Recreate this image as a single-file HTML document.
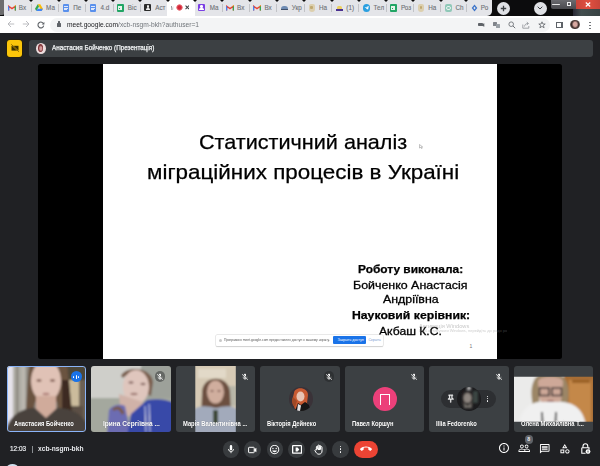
<!DOCTYPE html>
<html><head><meta charset="utf-8"><style>
*{margin:0;padding:0;box-sizing:border-box}
html,body{width:600px;height:466px;overflow:hidden;background:#202124;font-family:"Liberation Sans",sans-serif}
.a{position:absolute}
.tt{font-size:6.3px;color:#6e7175;-webkit-text-stroke:0.1px #6e7175;white-space:nowrap;line-height:1}
.notch{top:0;width:0;height:0;border-left:2px solid transparent;border-right:2px solid transparent;border-top:2.5px solid #0c0c0d}
#url{left:66.5px;top:20.5px;transform:scaleX(0.888);font-size:7.5px;line-height:1;color:#202124;white-space:nowrap;transform-origin:0 0}
#url span{color:#70757a}
#nametx{left:52px;top:44.5px;transform:scaleX(0.928);font-size:6.8px;line-height:1;color:#f1f3f4;-webkit-text-stroke:0.25px #f1f3f4;white-space:nowrap;transform-origin:0 0}
.st{font-size:21px;line-height:1;color:#000;-webkit-text-stroke:0.25px #000;white-space:nowrap;transform-origin:0 0}
.sb{font-size:10.8px;line-height:1;color:#000;-webkit-text-stroke:0.25px #000;font-weight:bold;white-space:nowrap;transform-origin:0 0}
.sr{font-size:11.2px;line-height:1;color:#000;-webkit-text-stroke:0.3px #000;white-space:nowrap;transform-origin:0 0}
.tile{position:absolute;top:366px;width:79.5px;height:65.5px;background:#3c4043;border-radius:3px;overflow:hidden}
.tn{top:420.6px;transform:scaleX(0.92);font-size:6.3px;line-height:1;color:#fff;font-weight:bold;white-space:nowrap;transform-origin:0 0;text-shadow:0 0 1px rgba(0,0,0,0.4)}
</style></head><body>
<div class="a" style="left:0;top:0;width:600px;height:16px;background:#0c0c0d"></div>
<div class="a" style="left:0;top:0;width:5px;height:16px;background:#6c6c6e;border-bottom-right-radius:3px;height:15px"></div>
<div class="a" style="left:4px;top:0;width:488px;height:16px;background:#e4e5e9;border-bottom-right-radius:5px"></div>
<div class="a" style="left:166.5px;top:0;width:28.5px;height:16px;background:#fff;border-radius:3px 3px 0 0"></div>
<svg class="a" style="left:7.8px;top:5px" width="8" height="6" viewBox="0 0 8 6"><path d="M0.6 5.6V1.2L4 3.6 7.4 1.2V5.6" fill="none" stroke="#ea4335" stroke-width="1.3"/><path d="M0.6 5.6V1.2" stroke="#4285f4" stroke-width="1.3"/><path d="M7.4 5.6V1.2" stroke="#34a853" stroke-width="1.3"/><path d="M6.6 1.2l1-0.6" stroke="#fbbc04" stroke-width="1"/></svg>
<div class="a tt" style="left:18.8px;top:5.3px">Вх</div>
<svg class="a" style="left:35.1px;top:4.2px" width="8" height="7" viewBox="0 0 8 7"><path d="M2.7 0.3h2.6l2.6 4.5-1.3 2.2z" fill="#fbbc04"/><path d="M2.7 0.3L0 4.8l1.3 2.2 2.7-4.5z" fill="#34a853"/><path d="M1.3 7h5.4l1.2-2.2H2.6z" fill="#4285f4"/></svg>
<div class="a tt" style="left:46.1px;top:5.3px">Ма</div>
<div class="a" style="left:62.5px;top:3.8px;width:6.5px;height:8px;background:#5a90ec;border-radius:1px"><div class="a" style="left:1.5px;top:2.5px;width:3.5px;height:0.7px;background:#dfe8fb"></div><div class="a" style="left:1.5px;top:4px;width:3.5px;height:0.7px;background:#dfe8fb"></div><div class="a" style="left:1.5px;top:5.5px;width:2.5px;height:0.7px;background:#dfe8fb"></div></div>
<div class="a tt" style="left:73.3px;top:5.3px">Пе</div>
<div class="a" style="left:89.8px;top:3.8px;width:6.5px;height:8px;background:#5a90ec;border-radius:1px"><div class="a" style="left:1.5px;top:2.5px;width:3.5px;height:0.7px;background:#dfe8fb"></div><div class="a" style="left:1.5px;top:4px;width:3.5px;height:0.7px;background:#dfe8fb"></div><div class="a" style="left:1.5px;top:5.5px;width:2.5px;height:0.7px;background:#dfe8fb"></div></div>
<div class="a tt" style="left:100.6px;top:5.3px">4.d</div>
<div class="a" style="left:116.8px;top:3.8px;width:7px;height:8px;background:#22a565;border-radius:1px"><div class="a" style="left:1.4px;top:3.6px;width:4.2px;height:0.9px;background:#e6f4ea"></div><div class="a" style="left:3px;top:2px;width:0.9px;height:4.5px;background:#e6f4ea"></div><div class="a" style="left:1.4px;top:2px;width:4.2px;height:4.5px;border:0.7px solid #e6f4ea"></div></div>
<div class="a tt" style="left:127.8px;top:5.3px">Віс</div>
<div class="a" style="left:144.4px;top:4px;width:7px;height:7px;background:#2b2b2b;border-radius:1px"><div class="a" style="left:2.3px;top:1.4px;width:2.4px;height:2.4px;border-radius:50%;background:#f0f0f0"></div><div class="a" style="left:1.4px;top:4.2px;width:4.2px;height:1.8px;border-radius:1.5px 1.5px 0 0;background:#f0f0f0"></div></div>
<div class="a tt" style="left:155.20000000000002px;top:5.3px">Аст</div>
<div class="a" style="left:198px;top:4px;width:7px;height:7px;background:#7b3fe4;border-radius:1px"><div class="a" style="left:2.3px;top:1.4px;width:2.4px;height:2.4px;border-radius:50%;background:#fff"></div><div class="a" style="left:1.4px;top:4.2px;width:4.2px;height:1.8px;border-radius:1.5px 1.5px 0 0;background:#fff"></div></div>
<div class="a tt" style="left:209.8px;top:5.3px">Ма</div>
<svg class="a" style="left:226.10000000000002px;top:5px" width="8" height="6" viewBox="0 0 8 6"><path d="M0.6 5.6V1.2L4 3.6 7.4 1.2V5.6" fill="none" stroke="#ea4335" stroke-width="1.3"/><path d="M0.6 5.6V1.2" stroke="#4285f4" stroke-width="1.3"/><path d="M7.4 5.6V1.2" stroke="#34a853" stroke-width="1.3"/><path d="M6.6 1.2l1-0.6" stroke="#fbbc04" stroke-width="1"/></svg>
<div class="a tt" style="left:237.10000000000002px;top:5.3px">Вх</div>
<svg class="a" style="left:253.4px;top:5px" width="8" height="6" viewBox="0 0 8 6"><path d="M0.6 5.6V1.2L4 3.6 7.4 1.2V5.6" fill="none" stroke="#ea4335" stroke-width="1.3"/><path d="M0.6 5.6V1.2" stroke="#4285f4" stroke-width="1.3"/><path d="M7.4 5.6V1.2" stroke="#34a853" stroke-width="1.3"/><path d="M6.6 1.2l1-0.6" stroke="#fbbc04" stroke-width="1"/></svg>
<div class="a tt" style="left:264.4px;top:5.3px">Вх</div>
<div class="a" style="left:281.4px;top:5.5px;width:6.5px;height:4.5px;background:#6f8cb4;border-radius:3px 3px 0.5px 0.5px;"></div><div class="a" style="left:281.4px;top:9px;width:6.5px;height:1.2px;background:#40506a;border-radius:0;"></div>
<div class="a tt" style="left:291.7px;top:5.3px">Укр</div>
<div class="a" style="left:308.7px;top:4px;width:6px;height:7.5px;background:#dccfae;border-radius:2px 2px 3px 3px;"></div><div class="a" style="left:310.4px;top:5.8px;width:2.6px;height:3.5px;background:#c0a870;border-radius:1px;"></div>
<div class="a tt" style="left:319.0px;top:5.3px">На</div>
<div class="a" style="left:336.5px;top:5.5px;width:5px;height:3.5px;background:#ecd060;border-radius:1.5px 1.5px 0 0;"></div><div class="a" style="left:335.5px;top:9px;width:7px;height:1.5px;background:#4a3090;border-radius:0;"></div>
<div class="a tt" style="left:346.3px;top:5.3px">(1)</div>
<div class="a" style="left:362.8px;top:4px;width:7.5px;height:7.5px;background:#2a9fe0;border-radius:50%;"></div><svg class="a" style="left:362.8px;top:4px" width="7.5" height="7.5" viewBox="0 0 8 8"><path d="M1.6 3.9L6.2 2.1 5.4 6 3.8 4.8 3.2 5.6 3.2 4.4 5.4 2.8 2.8 4.2z" fill="#fff"/></svg>
<div class="a tt" style="left:373.6px;top:5.3px">Тел</div>
<div class="a" style="left:389.90000000000003px;top:3.8px;width:7px;height:8px;background:#22a565;border-radius:1px"><div class="a" style="left:1.4px;top:3.6px;width:4.2px;height:0.9px;background:#e6f4ea"></div><div class="a" style="left:3px;top:2px;width:0.9px;height:4.5px;background:#e6f4ea"></div><div class="a" style="left:1.4px;top:2px;width:4.2px;height:4.5px;border:0.7px solid #e6f4ea"></div></div>
<div class="a tt" style="left:400.90000000000003px;top:5.3px">Роз</div>
<div class="a" style="left:417.9px;top:4px;width:6px;height:7.5px;background:#dccfae;border-radius:2px 2px 3px 3px;"></div><div class="a" style="left:419.59999999999997px;top:5.8px;width:2.6px;height:3.5px;background:#c0a870;border-radius:1px;"></div>
<div class="a tt" style="left:428.2px;top:5.3px">На</div>
<div class="a" style="left:444.7px;top:4px;width:7.5px;height:7.5px;background:#8fc8b8;border-radius:2px;"></div><div class="a" style="left:446.3px;top:5.6px;width:4.3px;height:4.3px;border-radius:50%;border:0.9px solid #e6f4f0"></div>
<div class="a tt" style="left:455.5px;top:5.3px">Ch</div>
<svg class="a" style="left:470.5px;top:3.5px" width="7" height="8" viewBox="0 0 7 8"><path d="M3.5 0.5L6.3 4 3.5 7.5 0.7 4z" fill="#3b73c9"/><path d="M3.5 2.5L4.6 4 3.5 5.5 2.4 4z" fill="#e4e5e9"/></svg>
<div class="a tt" style="left:480.8px;top:5.3px">Ро</div>
<div class="a" style="left:30.8px;top:4px;width:0.8px;height:8px;background:#c2c3c7"></div>
<div class="a" style="left:58.0px;top:4px;width:0.8px;height:8px;background:#c2c3c7"></div>
<div class="a" style="left:85.3px;top:4px;width:0.8px;height:8px;background:#c2c3c7"></div>
<div class="a" style="left:112.5px;top:4px;width:0.8px;height:8px;background:#c2c3c7"></div>
<div class="a" style="left:139.9px;top:4px;width:0.8px;height:8px;background:#c2c3c7"></div>
<div class="a" style="left:221.8px;top:4px;width:0.8px;height:8px;background:#c2c3c7"></div>
<div class="a" style="left:249.1px;top:4px;width:0.8px;height:8px;background:#c2c3c7"></div>
<div class="a" style="left:276.4px;top:4px;width:0.8px;height:8px;background:#c2c3c7"></div>
<div class="a" style="left:303.7px;top:4px;width:0.8px;height:8px;background:#c2c3c7"></div>
<div class="a" style="left:331.0px;top:4px;width:0.8px;height:8px;background:#c2c3c7"></div>
<div class="a" style="left:358.3px;top:4px;width:0.8px;height:8px;background:#c2c3c7"></div>
<div class="a" style="left:385.6px;top:4px;width:0.8px;height:8px;background:#c2c3c7"></div>
<div class="a" style="left:412.9px;top:4px;width:0.8px;height:8px;background:#c2c3c7"></div>
<div class="a" style="left:440.2px;top:4px;width:0.8px;height:8px;background:#c2c3c7"></div>
<div class="a" style="left:465.5px;top:4px;width:0.8px;height:8px;background:#c2c3c7"></div>
<div class="a notch" style="left:29.3px"></div>
<div class="a notch" style="left:56.5px"></div>
<div class="a notch" style="left:83.8px"></div>
<div class="a notch" style="left:111px"></div>
<div class="a notch" style="left:138.4px"></div>
<div class="a notch" style="left:165.6px"></div>
<div class="a notch" style="left:193px"></div>
<div class="a notch" style="left:220.3px"></div>
<div class="a notch" style="left:247.6px"></div>
<div class="a notch" style="left:274.9px"></div>
<div class="a notch" style="left:302.2px"></div>
<div class="a notch" style="left:329.5px"></div>
<div class="a notch" style="left:356.8px"></div>
<div class="a notch" style="left:384.1px"></div>
<div class="a notch" style="left:411.4px"></div>
<div class="a notch" style="left:438.7px"></div>
<div class="a notch" style="left:464px"></div>
<div class="a tt" style="left:170.8px;top:5.6px;font-size:5px;color:#8a8d91;width:3.2px;overflow:hidden;-webkit-mask-image:linear-gradient(90deg,#000 30%,transparent)">M</div>
<div class="a" style="left:176px;top:4.2px;width:7px;height:7px;border-radius:50%;background:radial-gradient(circle,#d42638 0 35%,rgba(226,60,70,0.6) 60%,rgba(255,255,255,0) 72%)"></div>
<svg class="a" style="left:184.7px;top:5.4px" width="4.6" height="4.6" viewBox="0 0 5 5"><path d="M0.6 0.6L4.4 4.4M4.4 0.6L0.6 4.4" stroke="#3c4043" stroke-width="1.1"/></svg>
<div class="a" style="left:496.5px;top:1.5px;width:13px;height:13px;background:#dfe1e5;border-radius:50%;"></div>
<svg class="a" style="left:499.5px;top:4.5px" width="7" height="7" viewBox="0 0 7 7"><path d="M3.5 0.8V6.2M0.8 3.5H6.2" stroke="#3c4043" stroke-width="1.3"/></svg>
<div class="a" style="left:533.5px;top:1.5px;width:13px;height:13px;background:#dfe1e5;border-radius:50%;"></div>
<svg class="a" style="left:537px;top:6px" width="6" height="4" viewBox="0 0 6 4"><path d="M0.7 0.7L3 3 5.3 0.7" fill="none" stroke="#3c4043" stroke-width="1"/></svg>
<div class="a" style="left:551px;top:0;width:25px;height:9px;background:linear-gradient(#6a6a6e,#4a4a4e);border-radius:0 0 0 2px"></div>
<div class="a" style="left:576px;top:0;width:24px;height:9px;background:linear-gradient(90deg,#c8453a,#e05040 50%,#c8453a);"></div>
<div class="a" style="left:573px;top:9px;width:27px;height:7px;background:linear-gradient(90deg,#334,#5a6a6a 30%,#4a5a5a);opacity:0.7"></div>
<div class="a" style="left:552px;top:3.8px;width:7.5px;height:1.6px;background:#e8e8e8;border-radius:0.5px;"></div>
<div class="a" style="left:566.5px;top:2.2px;width:4.5px;height:4px;border:1.1px solid #eee;border-top-width:1.5px"></div>
<svg class="a" style="left:585px;top:2px" width="6" height="5" viewBox="0 0 6 5"><path d="M0.8 0.5L5.2 4.5M5.2 0.5L0.8 4.5" stroke="#fff" stroke-width="1.2"/></svg>
<div class="a" style="left:0;top:16px;width:600px;height:17px;background:#fff"></div>
<div class="a" style="left:50px;top:17.5px;width:500px;height:14px;background:#f3f4f5;border-radius:7px"></div>
<svg class="a" style="left:6.5px;top:20.3px" width="8" height="8" viewBox="0 0 8 8"><path d="M7.2 4H1M4 1L1 4 4 7" fill="none" stroke="#b4b6ba" stroke-width="0.9"/></svg>
<svg class="a" style="left:21.5px;top:20.3px" width="8" height="8" viewBox="0 0 8 8"><path d="M0.8 4H7M4 1L7 4 4 7" fill="none" stroke="#b4b6ba" stroke-width="0.9"/></svg>
<svg class="a" style="left:36.5px;top:20.5px" width="8" height="8" viewBox="0 0 8 8"><path d="M6.6 3A2.9 2.9 0 1 0 6.7 4.6" fill="none" stroke="#5f6368" stroke-width="1.1"/><path d="M7.4 0.9V3.6H4.7z" fill="#5f6368"/></svg>
<div class="a" style="left:57px;top:23.2px;width:4px;height:3.5px;background:#5f6368;border-radius:0.5px;"></div>
<div class="a" style="left:57.7px;top:21.3px;width:2.6px;height:3px;border:0.8px solid #5f6368;border-bottom:none;border-radius:1.3px 1.3px 0 0"></div>
<div class="a" id="url">meet.google.com<span>/xcb-nsgm-bkh?authuser=1</span></div>
<div class="a" style="left:478px;top:22.8px;width:4.5px;height:3.3px;background:#5f6368;border-radius:0.8px;"></div><svg class="a" style="left:482px;top:22.5px" width="3" height="4" viewBox="0 0 3 4"><path d="M0 1.3L2.3 0.3V3.7L0 2.7z" fill="#5f6368"/></svg>
<div class="a" style="left:492.5px;top:21.5px;width:4px;height:4.5px;background:#80848a;border-radius:0.5px;"></div><div class="a" style="left:495.5px;top:23.5px;width:4px;height:4px;background:#9aa0a6;border-radius:0.5px;"></div>
<svg class="a" style="left:507.5px;top:21px" width="8" height="8" viewBox="0 0 8 8"><circle cx="3.2" cy="3.2" r="2.3" fill="none" stroke="#6f7378" stroke-width="0.9"/><path d="M4.9 4.9L7.2 7.2" stroke="#6f7378" stroke-width="1"/></svg>
<svg class="a" style="left:522px;top:21px" width="8" height="8" viewBox="0 0 8 8"><path d="M0.8 3.5V7.2H6.8V5" fill="none" stroke="#8a8e93" stroke-width="0.8"/><path d="M2.5 5.5C2.8 3.5 4 2.5 6 2.5M4.8 1.1L6.5 2.5 4.8 3.9" fill="none" stroke="#8a8e93" stroke-width="0.8"/></svg>
<svg class="a" style="left:537.5px;top:21px" width="8" height="8" viewBox="0 0 8 8"><path d="M4 0.8L4.9 3H7.2L5.4 4.4 6.1 6.8 4 5.4 1.9 6.8 2.6 4.4 0.8 3H3.1z" fill="none" stroke="#5f6368" stroke-width="0.8"/></svg>
<div class="a" style="left:556px;top:21.5px;width:6.5px;height:6.5px;border:1px solid #5f6368;border-right-width:2.2px"></div>
<div class="a" style="left:570px;top:19.5px;width:9.8px;height:9.8px;border-radius:50%;background:radial-gradient(ellipse 35% 45% at 52% 48%,#d8a8a0 0 50%,rgba(0,0,0,0) 100%),radial-gradient(circle at 50% 50%,#3a2a28 0 55%,#8a8078 80%,#c0b8b0 100%)"></div>
<div class="a" style="left:589.3px;top:21.5px;width:1.4px;height:1.4px;background:#5f6368;border-radius:50%;"></div>
<div class="a" style="left:589.3px;top:24.5px;width:1.4px;height:1.4px;background:#5f6368;border-radius:50%;"></div>
<div class="a" style="left:589.3px;top:27.5px;width:1.4px;height:1.4px;background:#5f6368;border-radius:50%;"></div>
<div class="a" style="left:7px;top:39.5px;width:15px;height:17px;background:#fbc50a;border-radius:3px;box-shadow:0 0 0 0.6px #2a2000"></div>
<svg class="a" style="left:9.5px;top:43px" width="10" height="10" viewBox="0 0 10 10"><path d="M1.5 2.8H8.5V7.6H1.5z" fill="#3b3000"/><path d="M1 1.2L9 8.8" stroke="#fbbc04" stroke-width="1.1"/><path d="M1.3 1.3L8.8 8.8" stroke="#3b3000" stroke-width="0.6"/></svg>
<div class="a" style="left:29px;top:39.5px;width:564px;height:17.5px;background:#3c4043;border-radius:3px"></div>
<div class="a" style="left:35.7px;top:43px;width:10.2px;height:10.5px;border-radius:50%;background:#ecdcdc"></div>
<div class="a" style="left:38.3px;top:44.2px;width:4.8px;height:7.6px;border-radius:50%;background:radial-gradient(ellipse at 55% 55%,#d49a9a 0 25%,#7a2a2e 55%,#b87878 100%)"></div>
<div class="a" id="nametx">Анастасия Бойченко (Презентація)</div>
<div class="a" style="left:38px;top:64px;width:524px;height:295px;background:#000;border-radius:2.5px"></div>
<div class="a" style="left:102.5px;top:64px;width:394.5px;height:295px;background:#fff"></div>
<div class="a st" id="t1" style="left:198.9px;top:131.2px;transform:scaleX(1.029)">Статистичний аналіз</div>
<div class="a st" id="t2" style="left:146.6px;top:160.5px;transform:scaleX(1.067)">міграційних процесів в Україні</div>
<svg class="a" style="left:418.5px;top:143.5px" width="4" height="5" viewBox="0 0 4 5"><path d="M0.5 0.5V4.2L1.5 3.2 2.5 4.6 3.2 4.2 2.3 2.9H3.6z" fill="#fff" stroke="#888" stroke-width="0.5"/></svg>
<div class="a sb" id="b1" style="left:358.2px;top:263.8px;transform:scaleX(1.104)">Роботу виконала:</div>
<div class="a sr" id="b2" style="left:353.2px;top:279.9px;transform:scaleX(1.109)">Бойченко Анастасія</div>
<div class="a sr" id="b3" style="left:382.6px;top:294px;transform:scaleX(1.106)">Андріївна</div>
<div class="a sb" id="b4" style="left:352.2px;top:309.8px;transform:scaleX(1.132)">Науковий керівник:</div>
<div class="a sr" id="b5" style="left:379.4px;top:326.3px;transform:scaleX(1.087)">Акбаш К.С.</div>
<div class="a" style="left:469.5px;top:342.5px;font-size:5px;color:#777">1</div>
<div class="a" id="wm1" style="left:418.7px;top:323.6px;font-size:5.4px;line-height:1;color:rgba(120,120,120,0.42);white-space:nowrap;transform:scaleX(1.05);transform-origin:0 0">Активація Windows</div>
<div class="a" id="wm2" style="left:419px;top:329.4px;font-size:4.2px;line-height:1;color:rgba(120,120,120,0.38);white-space:nowrap;width:78px;overflow:hidden"><span style="display:inline-block;transform:scaleX(0.95);transform-origin:0 0">Щоб активувати Windows, перейдіть до розділу "Параметри".</span></div>
<div class="a" style="left:497px;top:329.4px;font-size:4.2px;line-height:1;color:#3a3a3a;white-space:nowrap;width:10px;overflow:hidden">до розділу</div>
<div class="a" style="left:216px;top:334.7px;width:167px;height:11.5px;background:#fff;box-shadow:0 0 0 0.5px #d8d8d8,0 0.6px 1px rgba(0,0,0,0.2);border-radius:1px"></div>
<div class="a" style="left:218.5px;top:338.8px;width:3px;height:3px;background:#c8c8c8;border-radius:50%;"></div>
<div class="a" id="nt" style="left:224px;top:338.3px;font-size:3.6px;color:#555;white-space:nowrap;transform:scaleX(0.93);transform-origin:0 0">Програмою meet.google.com предоставлен доступ к вашему экрану.</div>
<div class="a" style="left:333px;top:336.2px;width:33px;height:8.2px;background:#1a73e8;border-radius:1px"></div>
<div class="a" style="left:337.5px;top:338.2px;font-size:3.6px;color:#fff;white-space:nowrap">Закрыть доступ</div>
<div class="a" style="left:368.5px;top:338.2px;font-size:3.6px;color:#7a9ad0;white-space:nowrap">Скрыть</div>
<div class="tile" style="left:6.5px"><svg width="80" height="66" viewBox="0 0 80 66" style="position:absolute;left:0;top:0">
<defs><filter id="bl1" x="-10%" y="-10%" width="120%" height="120%"><feGaussianBlur stdDeviation="0.9"/></filter></defs>
<g filter="url(#bl1)">
<rect x="-5" y="-5" width="90" height="76" fill="#8e8a82"/>
<rect x="-5" y="-5" width="11" height="76" fill="#e6e3ea"/>
<rect x="6" y="-5" width="17" height="76" fill="#b0ada5"/>
<rect x="9" y="-5" width="2.5" height="76" fill="#8c8980"/>
<rect x="15" y="-5" width="2.5" height="76" fill="#bdbab2"/>
<rect x="19" y="-5" width="2" height="76" fill="#8e8b84"/>
<rect x="56" y="-5" width="30" height="24" fill="#4e4738"/>
<rect x="60" y="14" width="12" height="30" fill="#cbbb9c"/>
<rect x="72" y="14" width="10" height="56" fill="#6c6052"/>
<rect x="56" y="40" width="20" height="30" fill="#5c5044"/>
<path d="M22 -4 L60 -4 L65 60 L52 60 L50 36 L28 36 L25 54 L19 44z" fill="#6a5240"/>
<ellipse cx="39" cy="15" rx="15" ry="21" fill="#e0c2b6"/>
<ellipse cx="32" cy="14.5" rx="2.6" ry="1.3" fill="#7e5a50"/>
<ellipse cx="45.5" cy="14.5" rx="2.6" ry="1.3" fill="#7e5a50"/>
<ellipse cx="39" cy="28" rx="3.5" ry="1.2" fill="#b08078"/>
<path d="M55 14 L62 14 L66 58 L55 60z" fill="#3c2c22"/>
<rect x="29" y="30" width="20" height="26" fill="#d0ab9b"/>
<path d="M-2 70 C0 50 14 42 28 42 L39 52 L50 42 C64 42 80 48 84 70z" fill="#4a423e"/>
</g></svg><div class="a" style="left:0;top:0;width:79.5px;height:65.5px;border:1.7px solid #8ab4f8;border-radius:3px"></div></div>
<div class="tile" style="left:91.0px"><svg width="80" height="66" viewBox="0 0 80 66" style="position:absolute;left:0;top:0">
<defs><filter id="bl2" x="-10%" y="-10%" width="120%" height="120%"><feGaussianBlur stdDeviation="0.9"/></filter></defs>
<g filter="url(#bl2)">
<rect x="-5" y="-5" width="90" height="76" fill="#cfcfca"/>
<rect x="50" y="-5" width="35" height="40" fill="#9da19a"/>
<rect x="-5" y="32" width="90" height="40" fill="#a4a89e"/>
<path d="M30 10 C34 0 60 0 62 16 L60 30 L56 28 L56 14 C52 6 40 4 32 12z" fill="#7a5e4e"/>
<ellipse cx="45" cy="21" rx="13" ry="17" fill="#dfc6bd"/>
<ellipse cx="40" cy="16.5" rx="2.6" ry="1.2" fill="#8a6c66"/>
<ellipse cx="52" cy="18" rx="2.6" ry="1.2" fill="#8a6c66"/>
<ellipse cx="43" cy="28" rx="3.6" ry="1.2" fill="#a07a74"/>
<path d="M28 28 L52 36 L50 50 L30 50z" fill="#d0b2a8"/>
<path d="M16 70 L18 44 C22 38 30 38 34 40 L40 70z" fill="#6c6cb2"/>
<path d="M36 70 L40 48 L56 34 C66 32 80 34 84 38 L84 70z" fill="#3848a8"/>
<path d="M22 44 C26 40 30 42 32 48" stroke="#7a5a44" stroke-width="3" fill="none"/>
<path d="M54 40 L55 66 M58 38 L59 66" stroke="#d8dcf0" stroke-width="1"/>
</g></svg></div>
<div class="tile" style="left:175.5px"><svg width="80" height="66" viewBox="0 0 80 66" style="position:absolute;left:0;top:0">
<defs><filter id="bl3" x="-10%" y="-10%" width="120%" height="120%"><feGaussianBlur stdDeviation="1.1"/></filter><clipPath id="cp3"><rect x="19.3" y="0" width="40.5" height="66"/></clipPath></defs>
<g clip-path="url(#cp3)"><g filter="url(#bl3)">
<rect x="15" y="-5" width="50" height="76" fill="#d6cab5"/>
<rect x="22" y="3" width="28" height="9" fill="#e2d9c8"/>
<rect x="50" y="20" width="10" height="20" fill="#b8b6a8"/>
<path d="M26 28 C25 8 53 8 54 26 L55 50 L25 50z" fill="#6c5040"/>
<ellipse cx="39.5" cy="26" rx="8.5" ry="11.5" fill="#d0ae9e"/>
<ellipse cx="36" cy="25" rx="1.6" ry="0.9" fill="#806058"/>
<ellipse cx="43" cy="25" rx="1.6" ry="0.9" fill="#806058"/>
<path d="M15 71 L15 46 C22 38 32 40 40 42 C48 40 58 38 64 46 L64 71z" fill="#a2aabb"/>
<rect x="37" y="44" width="5" height="14" fill="#3e4838"/>
</g></g></svg></div>
<div class="tile" style="left:260.0px"></div>
<div class="tile" style="left:344.5px"></div>
<div class="tile" style="left:429.0px"></div>
<div class="tile" style="left:513.5px"><svg width="80" height="66" viewBox="0 0 80 66" style="position:absolute;left:0;top:0">
<defs><filter id="bl7" x="-10%" y="-10%" width="120%" height="120%"><feGaussianBlur stdDeviation="0.9"/></filter><clipPath id="cp7"><rect x="0" y="10.8" width="80" height="45"/></clipPath></defs>
<g clip-path="url(#cp7)"><g filter="url(#bl7)">
<rect x="-5" y="5" width="90" height="56" fill="#e4e3e0"/>
<rect x="-5" y="5" width="24" height="56" fill="#ebebea"/>
<rect x="50" y="5" width="35" height="56" fill="#a86e34"/>
<rect x="55" y="14" width="22" height="42" fill="#c4884a"/>
<rect x="58" y="14" width="18" height="3" fill="#9a6028"/>
<path d="M19 40 C15 22 18 6 36 6 C54 6 57 22 53 40 L47 40 L46 18 L26 18 L25 40z" fill="#9c8666"/>
<path d="M24 16 C24 9 49 9 49 16 L48 30 C46 40 40 42 36.5 42 C33 42 27 40 25 30z" fill="#cea898"/>
<path d="M25.5 22 h9.5 v7.5 h-9.5z M38 22 h9.5 v7.5 h-9.5z" fill="none" stroke="#3c3232" stroke-width="1.6"/>
<ellipse cx="36.5" cy="35" rx="3.5" ry="1.2" fill="#a87a72"/>
<path d="M4 61 C6 44 16 36 26 36 L47 36 C58 36 70 42 72 61z" fill="#f0f0f0"/>
<path d="M28 46 L28.5 56 M42 46 L41.5 56" stroke="#1e1e1e" stroke-width="1.7"/>
</g></g></svg></div>
<div class="a" style="left:70.6px;top:371.2px;width:11px;height:11px;background:#1a73e8;border-radius:50%;"></div>
<div class="a" style="left:73.3px;top:375.59999999999997px;width:1.2px;height:2.2px;background:#fff;border-radius:0.6px;"></div>
<div class="a" style="left:75.5px;top:374.7px;width:1.2px;height:4px;background:#fff;border-radius:0.6px;"></div>
<div class="a" style="left:77.7px;top:375.59999999999997px;width:1.2px;height:2.2px;background:#fff;border-radius:0.6px;"></div>
<div class="a" style="left:154.5px;top:371.3px;width:10.4px;height:10.4px;border-radius:50%;background:rgba(32,33,36,0.45)"></div><svg class="a" style="left:155.7px;top:372.5px" width="8" height="8" viewBox="0 0 24 24"><path d="M19 11h-1.7c0 .74-.16 1.43-.43 2.05l1.23 1.23c.56-.98.9-2.09.9-3.28zm-4.02.17c0-.06.02-.11.02-.17V5c0-1.660-1.34-3-3-3S9 3.34 9 5v.18l5.98 5.99zM4.27 3L3 4.27l6.01 6.01V11c0 1.66 1.33 3 2.99 3 .22 0 .44-.03.65-.08l1.66 1.66c-.71.33-1.5.52-2.31.52-2.76 0-5.3-2.1-5.3-5.1H5c0 3.41 2.72 6.230 6 6.72V21h2v-3.28c.91-.13 1.77-.45 2.54-.9L19.73 21 21 19.730 4.27 3z" fill="#fff"/></svg>
<svg class="a" style="left:240.7px;top:372.5px" width="8" height="8" viewBox="0 0 24 24"><path d="M19 11h-1.7c0 .74-.16 1.43-.43 2.05l1.23 1.23c.56-.98.9-2.09.9-3.28zm-4.02.17c0-.06.02-.11.02-.17V5c0-1.660-1.34-3-3-3S9 3.34 9 5v.18l5.98 5.99zM4.27 3L3 4.27l6.01 6.01V11c0 1.66 1.33 3 2.99 3 .22 0 .44-.03.65-.08l1.66 1.66c-.71.33-1.5.52-2.31.52-2.76 0-5.3-2.1-5.3-5.1H5c0 3.41 2.72 6.230 6 6.72V21h2v-3.28c.91-.13 1.77-.45 2.54-.9L19.73 21 21 19.730 4.27 3z" fill="#fff"/></svg>
<div class="a" style="left:323.8px;top:371.3px;width:10.4px;height:10.4px;border-radius:50%;background:rgba(32,33,36,0.5)"></div><svg class="a" style="left:325px;top:372.5px" width="8" height="8" viewBox="0 0 24 24"><path d="M19 11h-1.7c0 .74-.16 1.43-.43 2.05l1.23 1.23c.56-.98.9-2.09.9-3.28zm-4.02.17c0-.06.02-.11.02-.17V5c0-1.660-1.34-3-3-3S9 3.34 9 5v.18l5.98 5.99zM4.27 3L3 4.27l6.01 6.01V11c0 1.66 1.33 3 2.99 3 .22 0 .44-.03.65-.08l1.66 1.66c-.71.33-1.5.52-2.31.52-2.76 0-5.3-2.1-5.3-5.1H5c0 3.41 2.72 6.230 6 6.72V21h2v-3.28c.91-.13 1.77-.45 2.54-.9L19.73 21 21 19.730 4.27 3z" fill="#fff"/></svg>
<svg class="a" style="left:410px;top:372.5px" width="8" height="8" viewBox="0 0 24 24"><path d="M19 11h-1.7c0 .74-.16 1.43-.43 2.05l1.23 1.23c.56-.98.9-2.09.9-3.28zm-4.02.17c0-.06.02-.11.02-.17V5c0-1.660-1.34-3-3-3S9 3.34 9 5v.18l5.98 5.99zM4.27 3L3 4.27l6.01 6.01V11c0 1.66 1.33 3 2.99 3 .22 0 .44-.03.65-.08l1.66 1.66c-.71.33-1.5.52-2.31.52-2.76 0-5.3-2.1-5.3-5.1H5c0 3.41 2.72 6.230 6 6.72V21h2v-3.28c.91-.13 1.77-.45 2.54-.9L19.73 21 21 19.730 4.27 3z" fill="#fff"/></svg>
<svg class="a" style="left:495px;top:372.5px" width="8" height="8" viewBox="0 0 24 24"><path d="M19 11h-1.7c0 .74-.16 1.43-.43 2.05l1.23 1.23c.56-.98.9-2.09.9-3.28zm-4.02.17c0-.06.02-.11.02-.17V5c0-1.660-1.34-3-3-3S9 3.34 9 5v.18l5.98 5.99zM4.27 3L3 4.27l6.01 6.01V11c0 1.66 1.33 3 2.99 3 .22 0 .44-.03.65-.08l1.66 1.66c-.71.33-1.5.52-2.31.52-2.76 0-5.3-2.1-5.3-5.1H5c0 3.41 2.72 6.230 6 6.72V21h2v-3.28c.91-.13 1.77-.45 2.54-.9L19.73 21 21 19.730 4.27 3z" fill="#fff"/></svg>
<div class="a" style="left:289px;top:387px;width:23.5px;height:23.5px;border-radius:50%;background:#3a3238;overflow:hidden"><svg width="24" height="24" viewBox="0 0 24 24"><defs><filter id="ba4"><feGaussianBlur stdDeviation="0.7"/></filter></defs><g filter="url(#ba4)"><path d="M5 6 C6 -1 19 0 19 8 L18 16 L20 20 L6 22 L3 14z" fill="#c85a30"/><path d="M4 10 C2 14 3 18 6 20 L8 14z" fill="#a04828"/><ellipse cx="11.5" cy="9.5" rx="4" ry="5" fill="#e8c4b4"/><path d="M6 24 L9 16 L12 18 L16 15 C19 16 21 19 22 24z" fill="#141214"/><path d="M9 17 L12 18.5 L11 24 L8 24z" fill="#e4e0e0"/></g></svg></div>
<div class="a" style="left:372.7px;top:387.2px;width:24px;height:24px;border-radius:50%;background:#ec407a"></div>
<div class="a" style="left:379.5px;top:393.5px;width:10.5px;height:11.5px;border:1.5px solid #fff;border-bottom:none"></div>
<div class="a" style="left:441.3px;top:390px;width:55px;height:18px;border-radius:9px;background:rgba(32,33,36,0.55)"></div>
<svg class="a" style="left:445.5px;top:393.7px" width="9.5" height="9.5" viewBox="0 0 24 24"><path d="M14 4v5c0 1.12.37 2.16 1 3H9c.65-.86 1-1.9 1-3V4h4m3-2H7c-.55 0-1 .45-1 1s.45 1 1 1h1v5c0 1.66-1.34 3-3 3v2h5.97v7l1 1 1-1v-7H19v-2c-1.66 0-3-1.34-3-3V4h1c.55 0 1-.45 1-1s-.45-1-1-1z" fill="#fff" stroke="#fff" stroke-width="0.8"/></svg>
<div class="a" style="left:487px;top:395.9px;width:1.3px;height:1.3px;background:#fff;border-radius:50%;"></div>
<div class="a" style="left:487px;top:398.09999999999997px;width:1.3px;height:1.3px;background:#fff;border-radius:50%;"></div>
<div class="a" style="left:487px;top:400.29999999999995px;width:1.3px;height:1.3px;background:#fff;border-radius:50%;"></div>
<div class="a" style="left:457.3px;top:387.3px;width:23.5px;height:23.5px;border-radius:50%;background:#1c1c1e;overflow:hidden"><svg width="24" height="24" viewBox="0 0 24 24"><defs><filter id="ba6"><feGaussianBlur stdDeviation="0.8"/></filter></defs><g filter="url(#ba6)"><rect x="16" y="4" width="5" height="12" fill="#3a4442"/><path d="M5 8 C6 2 15 2 16 8 L16 18 L5 18z" fill="#2c2826"/><ellipse cx="10.5" cy="11" rx="4" ry="5" fill="#8e8680"/><path d="M7 14 C8 20 13 20 14 14 L15 21 L7 21z" fill="#75706a"/><rect x="10" y="0" width="4" height="2.5" fill="#d8d8d8"/></g></svg></div>
<div class="a tn" id="n0" style="left:13.7px">Анастасия Бойченко</div>
<div class="a tn" id="n1" style="left:102.5px;transform:scaleX(1.04)">Ірина Сергіївна ...</div>
<div class="a tn" id="n2" style="left:183px">Марія Валентинівна ...</div>
<div class="a tn" id="n3" style="left:267px">Вікторія Дейнеко</div>
<div class="a tn" id="n4" style="left:352px">Павел Коршун</div>
<div class="a tn" id="n5" style="left:436px">Illia Fedorenko</div>
<div class="a tn" id="n6" style="left:520.6px">Олена Михайлівна Т...</div>
<div class="a" id="clock" style="left:10px;top:444.8px;font-size:7px;color:#e8eaed;white-space:nowrap;-webkit-text-stroke:0.2px #e8eaed;transform:scaleX(0.92);transform-origin:0 0">12:03</div>
<div class="a" style="left:31.6px;top:445.5px;width:0.9px;height:7px;background:#8a8e92;border-radius:0;"></div>
<div class="a" id="code" style="left:37.5px;top:444.8px;font-size:7px;color:#e8eaed;white-space:nowrap;font-weight:bold;transform:scaleX(0.95);transform-origin:0 0">xcb-nsgm-bkh</div>
<div class="a" style="left:7px;top:463.5px;width:11px;height:6px;border-radius:50%;background:#cfe0ee"></div>
<div class="a" style="left:222.55px;top:441px;width:16.5px;height:16.5px;border-radius:50%;background:#383b3e"></div>
<div class="a" style="left:244.35px;top:441px;width:16.5px;height:16.5px;border-radius:50%;background:#383b3e"></div>
<div class="a" style="left:266.55px;top:441px;width:16.5px;height:16.5px;border-radius:50%;background:#383b3e"></div>
<div class="a" style="left:288.35px;top:441px;width:16.5px;height:16.5px;border-radius:50%;background:#383b3e"></div>
<div class="a" style="left:310.45px;top:441px;width:16.5px;height:16.5px;border-radius:50%;background:#383b3e"></div>
<div class="a" style="left:332.15px;top:441px;width:16.5px;height:16.5px;border-radius:50%;background:#383b3e"></div>
<svg class="a" style="left:226.8px;top:445px" width="8" height="9" viewBox="0 0 8 9"><path d="M2.8 1.2A1.2 1.2 0 0 1 5.2 1.2V4A1.2 1.2 0 0 1 2.8 4z" fill="#fff"/><path d="M1.5 4A2.5 2.5 0 0 0 6.5 4M4 6.5V8.2" fill="none" stroke="#fff" stroke-width="0.9"/></svg>
<svg class="a" style="left:248.1px;top:445.5px" width="9" height="8" viewBox="0 0 9 8"><rect x="0.6" y="1.3" width="5.6" height="5.4" rx="0.6" fill="none" stroke="#fff" stroke-width="1"/><path d="M6.2 3.3L8.4 1.8V6.2L6.2 4.7z" fill="#fff"/></svg>
<svg class="a" style="left:269.2px;top:443.59999999999997px" width="11.2" height="11.2" viewBox="0 0 24 24"><path d="M11.99 2C6.47 2 2 6.48 2 12s4.47 10 9.99 10C17.52 22 22 17.52 22 12S17.52 2 11.99 2zM12 20c-4.42 0-8-3.58-8-8s3.58-8 8-8 8 3.58 8 8-3.58 8-8 8zm3.5-9c.83 0 1.5-.67 1.5-1.5S16.33 8 15.5 8 14 8.67 14 9.5s.67 1.5 1.5 1.5zm-7 0c.83 0 1.5-.67 1.5-1.5S9.33 8 8.5 8 7 8.67 7 9.5 7.67 11 8.5 11zm3.5 6.5c2.33 0 4.310-1.46 5.11-3.5H6.890c.8 2.04 2.78 3.5 5.11 3.5z" fill="#fff"/></svg>
<svg class="a" style="left:291.5px;top:444.8px" width="10.2" height="8.8" viewBox="0 0 10.2 8.8"><rect x="0.65" y="0.65" width="8.9" height="7.5" rx="0.5" fill="none" stroke="#fff" stroke-width="1.3"/><path d="M3.6 2.4H5.6L7.3 4.4 5.6 6.4H3.6z" fill="#fff"/></svg>
<svg class="a" style="left:313.6px;top:443.9px" width="10" height="11" viewBox="0 0 10 11"><path d="M2.4 6V3A0.7 0.7 0 0 1 3.8 3V5.2V1.8A0.7 0.7 0 0 1 5.2 1.8V5V2.1A0.7 0.7 0 0 1 6.6 2.1V5.2V3.2A0.7 0.7 0 0 1 8 3.2V7C8 8.9 6.8 10.2 5 10.2C3.4 10.2 2.7 9.4 1.9 8.2L1 6.8A0.7 0.7 0 0 1 2.2 6.1z" fill="none" stroke="#fff" stroke-width="1"/><path d="M3.8 5.2H6.6" stroke="#fff" stroke-width="1.6"/></svg>
<div class="a" style="left:339.54999999999995px;top:445.54999999999995px;width:1.7px;height:1.7px;background:#fff;border-radius:50%;"></div>
<div class="a" style="left:339.54999999999995px;top:448.34999999999997px;width:1.7px;height:1.7px;background:#fff;border-radius:50%;"></div>
<div class="a" style="left:339.54999999999995px;top:451.15px;width:1.7px;height:1.7px;background:#fff;border-radius:50%;"></div>
<div class="a" style="left:354.2px;top:441px;width:23.5px;height:16.8px;border-radius:8.4px;background:#ec4434"></div>
<svg class="a" style="left:359.8px;top:443.1px" width="12" height="12" viewBox="0 0 24 24"><path d="M12 9c-1.6 0-3.15.25-4.6.72v3.1c0 .39-.23.74-.56.9-.98.49-1.87 1.12-2.66 1.85-.18.18-.43.28-.7.28-.28 0-.53-.11-.71-.29L.29 13.08c-.18-.17-.29-.42-.29-.7 0-.28.11-.53.29-.71C3.34 8.78 7.46 7 12 7s8.66 1.78 11.71 4.67c.18.18.29.43.29.71 0 .28-.11.53-.29.71l-2.48 2.48c-.18.18-.43.29-.71.29-.27 0-.52-.11-.7-.28-.79-.74-1.69-1.36-2.67-1.85-.33-.16-.56-.5-.56-.9v-3.1C15.15 9.25 13.6 9 12 9z" fill="#fff"/></svg>
<svg class="a" style="left:498.0px;top:442.3px" width="12" height="12" viewBox="0 0 24 24"><path d="M11 7h2v2h-2zm0 4h2v6h-2zm1-9C6.48 2 2 6.48 2 12s4.48 10 10 10 10-4.48 10-10S17.52 2 12 2zm0 18c-4.41 0-8-3.590-8-8s3.59-8 8-8 8 3.59 8 8-3.59 8-8 8z" fill="#fff"/></svg>
<div class="a" style="left:491px;top:0;width:0;height:0"></div>
<svg class="a" style="left:517.55px;top:441.55px" width="12.5" height="12.5" viewBox="0 0 24 24"><path d="M16.5 13c-1.2 0-3.07.34-4.5 1-1.43-.67-3.3-1-4.5-1C5.33 13 1 14.08 1 16.25V19h22v-2.75c0-2.17-4.33-3.25-6.5-3.25zm-4 4.5h-10v-1.25c0-.54 2.56-1.75 5-1.75s5 1.21 5 1.75v1.25zm9 0H14v-1.25c0-.46-.2-.86-.52-1.22.88-.3 1.96-.53 3.02-.53 2.44 0 5 1.21 5 1.75v1.25zM7.5 12c1.93 0 3.5-1.57 3.5-3.5S9.43 5 7.5 5 4 6.57 4 8.5 5.57 12 7.5 12zm0-5.5c1.1 0 2 .9 2 2s-.9 2-2 2-2-.9-2-2 .9-2 2-2zm9 5.5c1.93 0 3.5-1.57 3.5-3.5S18.43 5 16.5 5 13 6.57 13 8.5s1.57 3.5 3.5 3.5zm0-5.5c1.1 0 2 .9 2 2s-.9 2-2 2-2-.9-2-2 .9-2 2-2z" fill="#fff"/></svg>
<div class="a" style="left:524.7px;top:435px;width:8.6px;height:8.6px;border-radius:50%;background:#5f6368"></div><div class="a" style="left:527.3px;top:436.6px;font-size:5.2px;line-height:1;color:#e8eaed;font-weight:bold">8</div>
<svg class="a" style="left:538.75px;top:442.75px" width="11.5" height="11.5" viewBox="0 0 24 24"><path d="M20 2H4c-1.1 0-1.99.9-1.99 2L2 22l4-4h14c1.1 0 2-.9 2-2V4c0-1.1-.9-2-2-2zm0 14H5.17L4 17.17V4h16v12zM6 12h12v2H6zm0-3h12v2H6zm0-3h12v2H6z" fill="#fff"/></svg>
<svg class="a" style="left:558.85px;top:442.65px" width="11.5" height="11.5" viewBox="0 0 24 24"><path d="M12 2l-5.5 9h11L12 2zm0 3.84L13.93 9h-3.87L12 5.84zM17.5 13c-2.49 0-4.5 2.01-4.5 4.5s2.01 4.5 4.5 4.5 4.5-2.01 4.5-4.5-2.01-4.5-4.5-4.5zm0 7c-1.38 0-2.5-1.12-2.5-2.5s1.12-2.5 2.5-2.5 2.5 1.12 2.5 2.5-1.12 2.5-2.5 2.5zM3 21.5h8v-8H3v8zm2-6h4v4H5v-4z" fill="#fff"/></svg>
<svg class="a" style="left:580px;top:442.5px" width="11" height="11" viewBox="0 0 11 11"><path d="M3 4.8V3.2A2.4 2.4 0 0 1 7.8 3.2V4.8" fill="none" stroke="#fff" stroke-width="1.1"/><path d="M1.8 4.8H9V6.4M5.6 10.2H1.8V4.8" fill="none" stroke="#fff" stroke-width="1.1"/><circle cx="8" cy="8.6" r="2.4" fill="#fff"/><path d="M8 7.6V9.2M8 9.7V10.2" stroke="#202124" stroke-width="0.8"/></svg>
</body></html>
